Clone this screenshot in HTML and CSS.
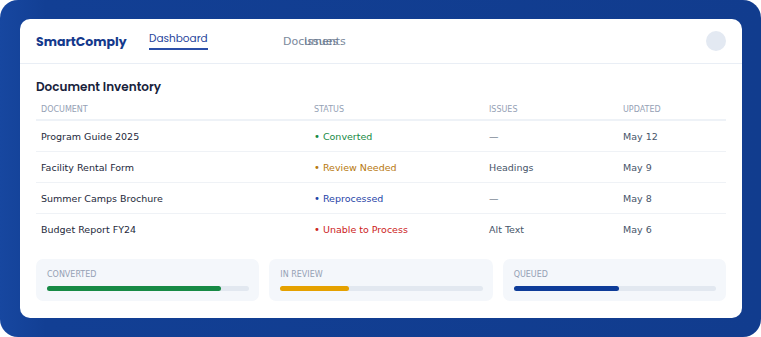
FILE: index.html
```html
<!DOCTYPE html>
<html lang="en">
<head>
<meta charset="UTF-8">
<meta name="viewport" content="width=device-width, initial-scale=1.0">
<title>SmartComply</title>
<link rel="stylesheet" href="styles.css">
</head>
<body>

<div class="frame">
    <div class="card">

        <!-- Top bar -->
        <header class="topbar">
            <span class="logo">SmartComply</span>
            <nav class="links">
                <span class="active">Dashboard</span>
                <span class="muted first">Documents</span>
                <span class="muted second">Issues</span>
            </nav>
            <span class="avatar"></span>
        </header>

        <main class="content">
            <h2>Document Inventory</h2>

            <!-- Inventory table -->
            <table class="inventory">
                <thead>
                    <tr>
                        <th class="c-doc">Document</th>
                        <th class="c-status">Status</th>
                        <th class="c-issues">Issues</th>
                        <th class="c-date">Updated</th>
                    </tr>
                </thead>
                <tbody>
                    <tr>
                        <td>Program Guide 2025</td>
                        <td class="green"><span class="dot">&bull;</span> Converted</td>
                        <td class="dim">&mdash;</td>
                        <td class="dim">May 12</td>
                    </tr>
                    <tr>
                        <td>Facility Rental Form</td>
                        <td class="amber"><span class="dot">&bull;</span> Review Needed</td>
                        <td class="dim">Headings</td>
                        <td class="dim">May 9</td>
                    </tr>
                    <tr>
                        <td>Summer Camps Brochure</td>
                        <td class="blue"><span class="dot">&bull;</span> Reprocessed</td>
                        <td class="dim">&mdash;</td>
                        <td class="dim">May 8</td>
                    </tr>
                    <tr>
                        <td>Budget Report FY24</td>
                        <td class="red"><span class="dot">&bull;</span> Unable to Process</td>
                        <td class="dim">Alt Text</td>
                        <td class="dim">May 6</td>
                    </tr>
                </tbody>
            </table>

            <!-- Progress cards -->
            <div class="stats">
                <div class="stat">
                    <div class="label">Converted</div>
                    <div class="track"><div class="fill f-green" style="width: 86%"></div></div>
                </div>
                <div class="stat">
                    <div class="label">In Review</div>
                    <div class="track"><div class="fill f-amber" style="width: 34%"></div></div>
                </div>
                <div class="stat">
                    <div class="label">Queued</div>
                    <div class="track"><div class="fill f-blue" style="width: 52%"></div></div>
                </div>
            </div>
        </main>

    </div>
</div>

</body>
</html>
```

FILE: styles.css
```css
/* PAGE */
body {
    margin: 0;
    padding: 0;
    background: #fff;
    font-family: "DejaVu Sans", sans-serif;
}

/* BLUE FRAME */
.frame {
    width: 761px;
    height: 337px;
    box-sizing: border-box;
    padding: 19px 19px 19px 20px;
    background: linear-gradient(90deg, #1747a0 0%, #123f94 6%, #113c8e 100%);
    border-radius: 18px;
}
.card {
    background: #fff;
    border-radius: 10px;
    height: 299px;
    overflow: hidden;
}

/* TOP BAR */
.topbar {
    display: flex;
    align-items: center;
    height: 44px;
    padding: 0 16px;
    border-bottom: 1px solid #e9eef5;
}
.logo {
    font-family: Poppins, "Open Sans", sans-serif;
    font-weight: 700;
    font-size: 12.5px;
    color: #14398c;
    width: 113px;
    padding-top: 2px;
}
.links {
    flex: 1;
    position: relative;
    height: 44px;
}
.links span {
    position: absolute;
    font-size: 11px;
}
.links .active {
    font-family: Poppins, "Open Sans", sans-serif;
    font-size: 10.5px;
    color: #1e3f9b;
    left: 0;
    top: 12px;
    line-height: 16px;
    padding-bottom: 1px;
    border-bottom: 2px solid #2a4ea8;
}
.links .muted {
    color: #64748b;
    top: 16px;
    opacity: 0.85;
}
.links .first { left: 134px; }
.links .second { left: 155px; }
.avatar {
    width: 20px;
    height: 20px;
    border-radius: 50%;
    background: #e3e9f2;
}

/* INVENTORY */
.content {
    padding: 15px 16px 0 16px;
}
h2 {
    font-family: Poppins, "Open Sans", sans-serif;
    font-size: 12px;
    line-height: 16px;
    font-weight: 600;
    color: #17223b;
    margin: 0 0 4px 0;
}
.inventory {
    width: 100%;
    table-layout: fixed;
    border-collapse: collapse;
    font-size: 9.5px;
}
.inventory th {
    text-align: left;
    font-weight: normal;
    font-size: 8px;
    line-height: 10px;
    text-transform: uppercase;
    color: #95a1b5;
    padding: 6px 5px 4px 5px;
    border-bottom: 2px solid #eef2f7;
}
.c-doc { width: 263px; }
.c-status { width: 165px; }
.c-issues { width: 124px; }
.inventory td {
    color: #1e293b;
    padding: 0 5px;
    height: 30px;
    border-bottom: 1px solid #eff2f6;
}
.inventory tr:last-child td { border-bottom: none; }
.inventory td.dim { color: #475569; }
.dot {
    font-size: 10px;
}
.inventory td.green { color: #178a45; }
.inventory td.amber { color: #b7790f; }
.inventory td.blue { color: #1f45a8; }
.inventory td.red { color: #cc2222; }

/* STATS */
.stats {
    display: grid;
    grid-template-columns: 1fr 1fr 1fr;
    gap: 10px;
    margin-top: 15px;
}
.stat {
    background: #f4f7fb;
    border-radius: 7px;
    padding: 11px 10px 10px 11px;
}
.label {
    font-size: 8px;
    line-height: 10px;
    text-transform: uppercase;
    color: #95a1b5;
    margin-bottom: 6px;
}
.track {
    height: 5px;
    border-radius: 3px;
    background: #e2e8f0;
}
.fill {
    height: 5px;
    border-radius: 3px;
}
.f-green { background: #178a45; }
.f-amber { background: #e5a100; }
.f-blue { background: #0e3c99; }
```
